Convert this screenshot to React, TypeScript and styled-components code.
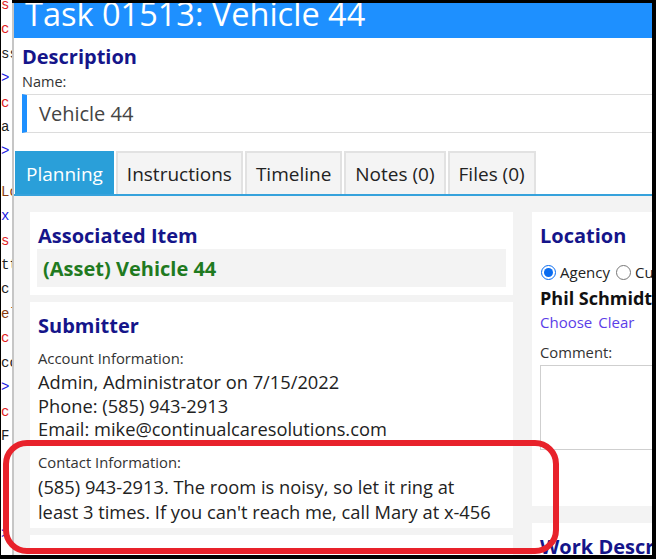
import styled, { createGlobalStyle } from "styled-components";

const GlobalStyle = createGlobalStyle`
  html, body {
    margin: 0;
    padding: 0;
    background: #000;
  }
  body {
    font-family: "Open Sans", "Noto Sans", sans-serif;
  }
`;

// editor window peeking out behind the task form
const codeLines = [
  { text: "s: 'task',", color: "#e01b1b" },
  { text: "c' : 1", color: "#e01b1b" },
  { text: "ss: true", color: "#222" },
  { text: "> </div>", color: "#1a1ae0" },
  { text: "c' : 2", color: "#e01b1b" },
  { text: "a: null", color: "#222" },
  { text: "> </span>", color: "#1a1ae0" },
  { text: "Lo = 0", color: "#8a3b0c", skip: 16 },
  { text: "x' : 4", color: "#1a1ae0" },
  { text: "s: 'id'", color: "#e01b1b" },
  { text: "tt: 0", color: "#222" },
  { text: "c: 1", color: "#222" },
  { text: "el = 3", color: "#8a3b0c" },
  { text: "c' : 5", color: "#e01b1b" },
  { text: "cc: 6", color: "#222" },
  { text: "> </p>", color: "#1a1ae0" },
  { text: "c' : 7", color: "#e01b1b" },
  { text: "F: 8", color: "#222" },
  { text: "  ", color: "#222" },
  { text: "  ", color: "#222" },
  { text: "  ", color: "#222" },
  { text: "> ", color: "#1a1ae0" },
];

const tabs = ["Planning", "Instructions", "Timeline", "Notes (0)", "Files (0)"];

const App = () => {
  return (
    <>
      <GlobalStyle />
      <Screen>
        <CodeStrip>
          {codeLines.map((line, i) => (
            <CodeLine key={i} $color={line.color} $skip={line.skip}>
              {line.text}
            </CodeLine>
          ))}
        </CodeStrip>
        <StripEdge />
        <Window>
          <TitleBar>Task 01513: Vehicle 44</TitleBar>
          <DescriptionBlock>
            <Heading>Description</Heading>
            <FieldLabel>Name:</FieldLabel>
            <NameField>Vehicle 44</NameField>
          </DescriptionBlock>
          <TabBar>
            {tabs.map((t, i) => (
              <Tab key={t} $active={i === 0}>
                {t}
              </Tab>
            ))}
          </TabBar>
          <ContentPanel>
            <Column $gap={7}>
              <Card $height={83}>
                <Heading>Associated Item</Heading>
                <AssetBox>(Asset) Vehicle 44</AssetBox>
              </Card>
              <Card $height={226}>
                <Heading>Submitter</Heading>
                <SmallLabel $top={8}>Account Information:</SmallLabel>
                <BodyText>Admin, Administrator on 7/15/2022</BodyText>
                <BodyText>Phone: (585) 943-2913</BodyText>
                <BodyText>Email: mike@continualcaresolutions.com</BodyText>
                <SmallLabel $top={10}>Contact Information:</SmallLabel>
                <BodyText $lh={25}>
                  (585) 943-2913. The room is noisy, so let it ring at
                  <br />
                  least 3 times. If you can't reach me, call Mary at x-456
                </BodyText>
              </Card>
              <Card $height={60} />
            </Column>
            <Column $gap={17}>
              <Card $height={294}>
                <Heading>Location</Heading>
                <RadioRow>
                  <Radio type="radio" name="loc" defaultChecked />
                  <RadioText>Agency</RadioText>
                  <Radio type="radio" name="loc" />
                  <RadioText>Customer</RadioText>
                </RadioRow>
                <PersonName>Phil Schmidt</PersonName>
                <LinkRow>
                  <LinkText>Choose</LinkText>
                  <LinkText>Clear</LinkText>
                </LinkRow>
                <SmallLabel $top={9}>Comment:</SmallLabel>
                <CommentBox />
              </Card>
              <Card $height={60}>
                <Heading>Work Description</Heading>
              </Card>
            </Column>
          </ContentPanel>
        </Window>
        <CalloutRing />
      </Screen>
    </>
  );
};
export default App;

const Screen = styled.div`
  position: relative;
  width: 656px;
  height: 559px;
  box-sizing: border-box;
  padding: 3px 4px 4px 1px;
  display: flex;
  background: #000;
  overflow: hidden;
`;

const CodeStrip = styled.div`
  width: 11px;
  flex-shrink: 0;
  background: #fff;
  overflow: hidden;
  font-family: "Liberation Mono", monospace;
  font-size: 14px;
  line-height: 24.4px;
  white-space: pre;
  margin-top: -10px;
`;

const CodeLine = styled.div<{ $color: string; $skip?: number }>`
  color: ${(p) => p.$color};
  margin-top: ${(p) => p.$skip ?? 0}px;
`;

const StripEdge = styled.div`
  width: 2px;
  flex-shrink: 0;
  background: #c6c6c6;
`;

const Window = styled.div`
  flex: 1;
  min-width: 0;
  background: #fff;
  overflow: hidden;
  display: flex;
  flex-direction: column;
`;

const TitleBar = styled.div`
  height: 35px;
  flex-shrink: 0;
  background: #1e90ff;
  color: #fff;
  font-size: 32.5px;
  line-height: 21px;
  padding-left: 11px;
  white-space: nowrap;
  overflow: hidden;
`;

const DescriptionBlock = styled.div`
  padding: 6px 0 0 8px;
`;

const Heading = styled.div`
  font-size: 20px;
  font-weight: 700;
  line-height: 26px;
  color: #15158a;
  white-space: nowrap;
`;

const FieldLabel = styled.div`
  font-size: 14.5px;
  line-height: 18px;
  color: #333;
  margin-top: 3px;
`;

const NameField = styled.div`
  margin-top: 3px;
  height: 39px;
  box-sizing: border-box;
  border-top: 1px solid #dcdcdc;
  border-bottom: 1px solid #dcdcdc;
  border-left: 5px solid #1e90ff;
  display: flex;
  align-items: center;
  padding-left: 12px;
  font-size: 20px;
  color: #444;
`;

const TabBar = styled.div`
  display: flex;
  gap: 2px;
  margin-top: 18px;
  padding-left: 1px;
  border-bottom: 2px solid #36a2dc;
  flex-shrink: 0;
`;

const Tab = styled.div<{ $active?: boolean }>`
  height: 43px;
  box-sizing: border-box;
  padding: 0 9px;
  display: flex;
  align-items: center;
  font-size: 19px;
  white-space: nowrap;
  background: ${(p) => (p.$active ? "#2a9fd9" : "#f4f4f4")};
  color: ${(p) => (p.$active ? "#fff" : "#222")};
  border: 2px solid ${(p) => (p.$active ? "#2a9fd9" : "#e2e2e2")};
  border-bottom: none;
`;

const ContentPanel = styled.div`
  flex: 1;
  background: #f3f3f3;
  padding: 16px 0 0 16px;
  display: grid;
  grid-template-columns: 483px 220px;
  column-gap: 19px;
  align-items: start;
`;

const Column = styled.div<{ $gap: number }>`
  display: flex;
  flex-direction: column;
  gap: ${(p) => p.$gap}px;
`;

const Card = styled.div<{ $height: number }>`
  height: ${(p) => p.$height}px;
  box-sizing: border-box;
  background: #fff;
  padding: 11px 7px 8px 8px;
`;

const AssetBox = styled.div`
  margin-top: 0;
  margin-left: -1px;
  height: 38px;
  display: flex;
  align-items: center;
  padding-left: 6px;
  background: #f3f3f3;
  color: #1f7a1f;
  font-size: 20px;
  font-weight: 700;
`;

const SmallLabel = styled.div<{ $top?: number }>`
  font-size: 14.8px;
  line-height: 23px;
  color: #333;
  margin-top: ${(p) => p.$top ?? 6}px;
`;

const BodyText = styled.div<{ $lh?: number }>`
  font-size: 18.3px;
  line-height: ${(p) => p.$lh ?? 23.7}px;
  color: #222;
  white-space: nowrap;
`;

const RadioRow = styled.div`
  display: flex;
  align-items: center;
  margin-top: 13px;
  height: 20px;
  white-space: nowrap;
`;

const Radio = styled.input`
  width: 15px;
  height: 15px;
  margin: 0 4px 0 1px;
  accent-color: #0a6cf0;
`;

const RadioText = styled.span`
  font-size: 15px;
  color: #222;
  margin-right: 5px;
`;

const PersonName = styled.div`
  margin-top: 5px;
  font-size: 18px;
  font-weight: 700;
  color: #111;
  line-height: 22px;
  white-space: nowrap;
`;

const LinkRow = styled.div`
  display: flex;
  gap: 6px;
  margin-top: 3px;
  line-height: 20px;
`;

const LinkText = styled.span`
  font-size: 15px;
  color: #5b3ee8;
  cursor: pointer;
`;

const CommentBox = styled.textarea`
  display: block;
  margin-top: 1px;
  width: 200px;
  height: 85px;
  box-sizing: border-box;
  border: 1px solid #cfcfcf;
  resize: none;
`;

// red annotation drawn over the contact details
const CalloutRing = styled.div`
  position: absolute;
  left: 3px;
  top: 440px;
  width: 556px;
  height: 114px;
  box-sizing: border-box;
  border: 6px solid #e8222b;
  border-radius: 24px;
  pointer-events: none;
`;
